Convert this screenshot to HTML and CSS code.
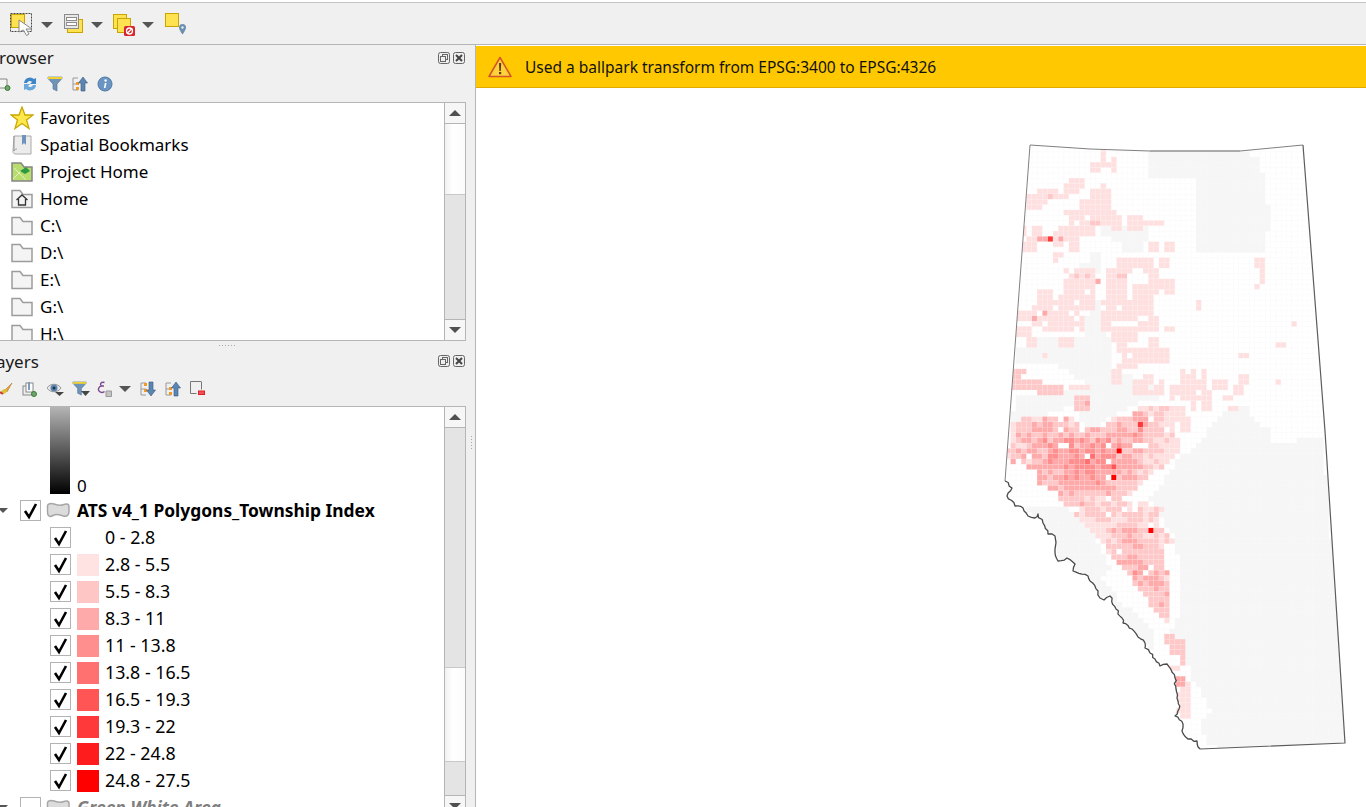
FILE: index.html
```html
<!DOCTYPE html>
<html lang="en">
<head>
<meta charset="utf-8">
<title>QGIS</title>
<link rel="stylesheet" href="styles.css">
<script src="map.js" defer></script>
</head>
<body>
<svg class="defs" width="0" height="0" aria-hidden="true">
  <symbol id="folder" viewBox="0 0 22 20"><path d="M1 18.500V1.500h8l3 4h9v13z" fill="#f4f4f4" stroke="#9c9c9c" stroke-width="1.500"/></symbol>
  <symbol id="check" viewBox="0 0 21 21"><path d="M5 11l4 6 7-13" fill="none" stroke="#000" stroke-width="2.600"/></symbol>
  <symbol id="blob" viewBox="0 0 24 17"><path d="M1.500 4C1.500 1.500 5 1 8 2s6 2 9 .8 6-1.500 6 2v5c0 3-2 5-5.500 4.200S11 11 7 13.500 1.500 13 1.500 10z" fill="#dcdcdc" stroke="#a6a6a6" stroke-width="1.500"/></symbol>
  <symbol id="ddn" viewBox="0 0 12 6"><path d="M0 0h12L6 6z" fill="#555"/></symbol>
  <symbol id="dock" viewBox="0 0 12 12"><rect x=".5" y=".5" width="11" height="11" rx="2" fill="#eee" stroke="#666"/><rect x="4.500" y="2.500" width="5" height="5" fill="none" stroke="#666"/><rect x="2.500" y="4.500" width="5" height="5" fill="#eee" stroke="#666"/></symbol>
  <symbol id="close" viewBox="0 0 12 12"><rect x=".5" y=".5" width="11" height="11" rx="2" fill="#eee" stroke="#666"/><path d="M3 3l6 6M9 3l-6 6" stroke="#444" stroke-width="2"/></symbol>
  <symbol id="upicon" viewBox="0 0 16 16"><path d="M1 2h5M1 2v12h5M1 8h5" fill="none" stroke="#999"/><rect x="4" y="6" width="3" height="3" fill="#f09a28"/><rect x="4" y="11" width="3" height="3" fill="#f09a28"/><path d="M11 1l4.500 6H13v8H9V7H6.500z" fill="#5b86b4" stroke="#35597f" stroke-width=".6"/></symbol>
  <symbol id="downicon" viewBox="0 0 16 16"><path d="M1 2h5M1 2v12h5M1 8h5" fill="none" stroke="#999"/><rect x="4" y="2" width="3" height="3" fill="#f09a28"/><rect x="4" y="8" width="3" height="3" fill="#f09a28"/><path d="M11 15l4.500-6H13V1H9v8H6.500z" fill="#5b86b4" stroke="#35597f" stroke-width=".6"/></symbol>
  <symbol id="filter" viewBox="0 0 16 16"><path d="M1 1h14v1.500L10 8v7l-4-2V8L1 2.500z" fill="#6f94b8" stroke="#4b7094" stroke-width=".6"/><rect x="1" y="1" width="14" height="2" fill="#f2d230"/></symbol>
</svg>

<div class="topstrip"></div>
<header class="toolbar">
  <span class="tb tb1"><svg width="24" height="24" viewBox="0 0 24 24"><rect x=".5" y="1.500" width="21" height="18" fill="none" stroke="#444" stroke-dasharray="2 1"/><rect x="1.500" y="2.500" width="13" height="13" fill="#ffe24f" stroke="#c8a500"/><path d="M9 8l13 9h-6l3 5-2.500 1.500-3-5.500L9 20z" fill="#fff" stroke="#888"/></svg></span>
  <span class="drop"><svg width="12" height="6"><use href="#ddn"/></svg></span>
  <span class="tb tb2"><svg width="20" height="20" viewBox="0 0 20 20"><rect x="3.500" y="5.500" width="15" height="13" fill="#ffe24f" stroke="#c8a500"/><rect x=".5" y=".5" width="14" height="14" fill="#e8e8e8" stroke="#8c8c8c"/><rect x="2.500" y="3.500" width="10" height="3" fill="#fff" stroke="#8c8c8c"/><rect x="2.500" y="8.500" width="10" height="3" fill="#fff" stroke="#8c8c8c"/></svg></span>
  <span class="drop"><svg width="12" height="6"><use href="#ddn"/></svg></span>
  <span class="tb tb3"><svg width="23" height="22" viewBox="0 0 23 22"><rect x=".5" y=".5" width="13" height="14" fill="#ffe24f" stroke="#c8a500"/><rect x="4.500" y="4.500" width="13" height="14" fill="#ffe24f" stroke="#c8a500"/><rect x="11" y="12" width="11" height="10" rx="1.500" fill="#d9262c"/><circle cx="16.500" cy="17" r="3" fill="none" stroke="#fff" stroke-width="1.300"/><path d="M14 19.500l5-5" stroke="#fff" stroke-width="1.300"/></svg></span>
  <span class="drop"><svg width="12" height="6"><use href="#ddn"/></svg></span>
  <span class="tb tb4"><svg width="22" height="22" viewBox="0 0 22 22"><rect x=".5" y=".5" width="13" height="13" fill="#ffe24f" stroke="#c8a500"/><path d="M17.500 11a3.500 3.500 0 0 1 3.500 3.500c0 2.500-3.500 7-3.500 7s-3.500-4.500-3.500-7a3.500 3.500 0 0 1 3.500-3.500z" fill="#6d8fb0"/><circle cx="17.500" cy="14.500" r="1.200" fill="#e8eef4"/></svg></span>
</header>

<main class="main">
  <aside class="side">
    <section class="panel">
      <div class="phead">
        <span class="ptitle ptitle-b">Browser</span>
        <span class="pbtns"><svg width="12" height="12"><use href="#dock"/></svg><svg width="12" height="12"><use href="#close"/></svg></span>
      </div>
      <div class="tools">
        <span class="ti"><svg width="16" height="16" viewBox="0 0 16 16"><path d="M-2 3h12v9H-2z" fill="#f4f4f4" stroke="#888"/><circle cx="10.500" cy="12" r="2.500" fill="#6da868" stroke="#3f7a3c"/></svg></span>
        <span class="ti"><svg width="16" height="16" viewBox="0 0 16 16"><path d="M2 7a6 6 0 0 1 10-4l2-1v6H8l2-2a3 3 0 0 0-5 1z" fill="#3f86c9"/><path d="M14 9a6 6 0 0 1-10 4l-2 1V8h6l-2 2a3 3 0 0 0 5-1z" fill="#6aa7dc"/></svg></span>
        <span class="ti"><svg width="16" height="16"><use href="#filter"/></svg></span>
        <span class="ti"><svg width="16" height="16"><use href="#upicon"/></svg></span>
        <span class="ti"><svg width="16" height="16" viewBox="0 0 16 16"><circle cx="8" cy="8" r="7" fill="#6a95c2" stroke="#4d78a5"/><circle cx="8.600" cy="4.500" r="1.200" fill="#fff"/><path d="M7.800 7h1.700l-1 5h-1.600z" fill="#fff"/></svg></span>
      </div>
      <div class="listbox listbox-b">
        <div class="tree">
          <div class="row row-b"><svg class="ic ic-star" width="24" height="24" viewBox="0 0 24 24"><path d="M12 1l3 8h8l-6.500 5 2.500 8.500-7-5-7 5L7.500 14 1 9h8z" fill="#ffe84d" stroke="#c9a800" stroke-width="1.300"/></svg><span class="fav">Favorites</span></div>
          <div class="row row-b"><svg class="ic" width="22" height="22" viewBox="0 0 22 22"><path d="M3 2h17v18H5c-3 0-3-2-3-3z" fill="#ececec" stroke="#aaa"/><path d="M3 2v15c1-2 2-2 3-2" fill="none" stroke="#999"/><path d="M11 1h4v10l-2-2-2 2z" fill="#6f93bd"/></svg>Spatial Bookmarks</div>
          <div class="row row-b"><svg class="ic" width="22" height="22" viewBox="0 0 22 22"><path d="M1 2h9l3 4h8v14H1z" fill="#b9dc6e" stroke="#858585" stroke-width="1.500"/><path d="M2 18L13 7M3 7l12 12" stroke="#e4f2c0"/><path d="M9 10l6-4 4 4-5 3z" fill="#2b9a3e"/></svg>Project Home</div>
          <div class="row row-b"><svg class="ic" width="22" height="20" viewBox="0 0 22 20"><use href="#folder"/><path d="M5.500 11L11 6l5.500 5M7.500 10v6h7v-6" fill="none" stroke="#333" stroke-width="1.300"/></svg>Home</div>
          <div class="row row-b"><svg class="ic" width="22" height="20"><use href="#folder"/></svg>C:\</div>
          <div class="row row-b"><svg class="ic" width="22" height="20"><use href="#folder"/></svg>D:\</div>
          <div class="row row-b"><svg class="ic" width="22" height="20"><use href="#folder"/></svg>E:\</div>
          <div class="row row-b"><svg class="ic" width="22" height="20"><use href="#folder"/></svg>G:\</div>
          <div class="row row-b"><svg class="ic" width="22" height="20"><use href="#folder"/></svg>H:\</div>
        </div>
        <div class="sbar">
          <div class="sbtn"><i class="tri up"></i></div>
          <div class="thumb thumb-b"></div>
          <div class="track"></div>
          <div class="sbtn"><i class="tri dn"></i></div>
        </div>
      </div>
    </section>

    <div class="split"><span class="dots"></span></div>

    <section class="panel panel-l">
      <div class="phead">
        <span class="ptitle ptitle-l">Layers</span>
        <span class="pbtns"><svg width="12" height="12"><use href="#dock"/></svg><svg width="12" height="12"><use href="#close"/></svg></span>
      </div>
      <div class="tools tools-l">
        <span class="ti"><svg width="16" height="16" viewBox="0 0 16 16"><path d="M15 2L8 9l2 2z" fill="#e8a33a" stroke="#a56d18" stroke-width=".5"/><path d="M8 8c-3 0-3 3-6 4 3 2 7 1 8-2z" fill="#d7c43a"/><path d="M3 11l3 2" stroke="#d23a3a" stroke-width="2"/></svg></span>
        <span class="ti"><svg width="16" height="16" viewBox="0 0 16 16"><rect x="1" y="5" width="9" height="9" fill="#eee" stroke="#888"/><rect x="4" y="2" width="7" height="9" fill="#fff" stroke="#888"/><path d="M6 1h2v8H6z" fill="#7d9cbd"/><circle cx="12" cy="13" r="2.500" fill="#6da868" stroke="#3f7a3c"/></svg></span>
        <span class="ti"><svg width="17" height="16" viewBox="0 0 17 16"><path d="M0 7c3-5 11-5 14 0-3 5-11 5-14 0z" fill="#e6e6e6" stroke="#999"/><circle cx="7" cy="7" r="3.500" fill="#5d86ae"/><circle cx="7" cy="7" r="1.500" fill="#1e3550"/><path d="M8 11h9l-4.500 4z" fill="#444"/></svg></span>
        <span class="ti"><svg width="18" height="16" viewBox="0 0 18 16"><use href="#filter" width="15" height="15"/><path d="M9 10h9l-4.500 5z" fill="#444"/></svg></span>
        <span class="ti ti-eps"><svg width="15" height="16" viewBox="0 0 15 16"><path d="M7.500 1.500C4 .5 2.500 3 4.500 5 1.500 5.500 .5 8.500 2.500 10.500c1.500 1.500 4 1 5 0M4.500 5H7" fill="none" stroke="#7b4a8e" stroke-width="1.400"/><path d="M9 10h5.500v5.500H9z" fill="#c4c4c4" stroke="#999"/></svg></span>
        <span class="ti ti-a"><svg width="12" height="6"><use href="#ddn"/></svg></span>
        <span class="ti"><svg width="16" height="16"><use href="#downicon"/></svg></span>
        <span class="ti"><svg width="16" height="16"><use href="#upicon"/></svg></span>
        <span class="ti"><svg width="15" height="15" viewBox="0 0 15 15"><path d="M11 .5H.5v12h6" fill="none" stroke="#777"/><path d="M11.500 .5v8" stroke="#777"/><rect x="8.500" y="10" width="6" height="3.500" fill="#ef5060" stroke="#d22"/></svg></span>
      </div>
      <div class="listbox listbox-l">
        <div class="tree">
          <div class="ramp"><span class="rampbar"></span><span class="rampval">0</span></div>
          <div class="row group"><i class="exp"></i><span class="cb"><svg width="21" height="21"><use href="#check"/></svg></span><svg class="blob" width="24" height="17"><use href="#blob"/></svg><b>ATS v4_1 Polygons_Township Index</b></div>
          <div class="row cat"><span class="cb"><svg width="21" height="21"><use href="#check"/></svg></span><span class="sw s0"></span>0 - 2.8</div>
          <div class="row cat"><span class="cb"><svg width="21" height="21"><use href="#check"/></svg></span><span class="sw s1"></span>2.8 - 5.5</div>
          <div class="row cat"><span class="cb"><svg width="21" height="21"><use href="#check"/></svg></span><span class="sw s2"></span>5.5 - 8.3</div>
          <div class="row cat"><span class="cb"><svg width="21" height="21"><use href="#check"/></svg></span><span class="sw s3"></span>8.3 - 11</div>
          <div class="row cat"><span class="cb"><svg width="21" height="21"><use href="#check"/></svg></span><span class="sw s4"></span>11 - 13.8</div>
          <div class="row cat"><span class="cb"><svg width="21" height="21"><use href="#check"/></svg></span><span class="sw s5"></span>13.8 - 16.5</div>
          <div class="row cat"><span class="cb"><svg width="21" height="21"><use href="#check"/></svg></span><span class="sw s6"></span>16.5 - 19.3</div>
          <div class="row cat"><span class="cb"><svg width="21" height="21"><use href="#check"/></svg></span><span class="sw s7"></span>19.3 - 22</div>
          <div class="row cat"><span class="cb"><svg width="21" height="21"><use href="#check"/></svg></span><span class="sw s8"></span>22 - 24.8</div>
          <div class="row cat"><span class="cb"><svg width="21" height="21"><use href="#check"/></svg></span><span class="sw s9"></span>24.8 - 27.5</div>
          <div class="row group off"><i class="exp"></i><span class="cb"></span><svg class="blob" width="24" height="17"><use href="#blob"/></svg><b><em>Green White Area</em></b></div>
        </div>
        <div class="sbar">
          <div class="sbtn"><i class="tri up"></i></div>
          <div class="track track-l1"></div>
          <div class="thumb thumb-l"></div>
          <div class="track track-l2"></div>
          <div class="sbtn sbtn-last"><i class="tri dn"></i></div>
        </div>
      </div>
      <span class="vdots"></span>
    </section>
  </aside>

  <section class="canvas">
    <div class="msgbar">
      <svg class="warn" width="24" height="22" viewBox="0 0 24 22"><path d="M12 1.500L23 20.500H1z" fill="#ffd23c" stroke="#d4552a" stroke-width="1.500" stroke-linejoin="round"/><path d="M11 7h2.200l-.4 8h-1.400z" fill="#5a3a10"/><rect x="11" y="16" width="2.200" height="2.200" fill="#5a3a10"/></svg>
      <span>Used a ballpark transform from EPSG:3400 to EPSG:4326</span>
    </div>
    <div class="mapwrap">
      <svg id="map" class="map" viewBox="476 88 890 719" preserveAspectRatio="xMinYMin">
        <defs>
          <clipPath id="ab"><path d="M1030 144L1090 148L1150 150L1240 150L1303 144L1325 430L1345 742L1200 748L1197 740L1188 738L1182 730L1182 720L1175 715L1178 700L1175 677L1167 663L1160 665L1155 658L1145 647L1145 642L1132 628L1122 617L1110 595L1100 597L1098 590L1090 580L1088 575L1073 570L1075 563L1067 557L1058 560L1055 535L1048 533L1043 522L1038 513L1035 517L1028 515L1023 507L1015 505L1007 495L1012 487L1005 480Z"/></clipPath>
        </defs>
        <g id="cells" class="cells" clip-path="url(#ab)"></g>
        <path class="edge edge-n" d="M1030 144L1090 148L1150 150"/>
        <path class="edge edge-d" d="M1150 150L1240 150"/>
        <path class="edge edge-n" d="M1240 150L1303 144"/>
        <path class="edge edge-r" d="M1303 144L1325 430L1345 742L1200 748"/>
        <path class="edge edge-n" d="M1005 480L1030 144"/>
        <path id="rockies" class="edge edge-m" d=""/>
      </svg>
    </div>
  </section>
</main>
</body>
</html>
```

FILE: styles.css
```css
* { box-sizing: border-box; }
html, body { margin: 0; height: 807px; overflow: hidden; background: #fff; }
body {
  display: flex; flex-direction: column; width: 1366px;
  font-family: "Noto Sans", "Open Sans", sans-serif; font-size: 17px; color: #000;
}
svg { display: block; flex: none; }
.defs { position: absolute; }

.topstrip { height: 2px; background: #fff; flex: none; }
.toolbar {
  height: 43px; flex: none; display: flex; align-items: center;
  background: #f0f0f0; border-top: 1px solid #c4c4c4; border-bottom: 1px solid #b5b5b5;
}
.tb { display: block; }
.tb1 { margin: 1px 0 0 10px; }
.tb2 { margin: 1px 0 0 11px; }
.tb3 { margin: 2px -1px 0 10px; }
.tb4 { margin: 1px 0 0 11px; }
.drop { display: block; margin: 3px 0 0 7px; }

.main { flex: 1; display: flex; min-height: 0; }
.side {
  width: 476px; flex: none; display: flex; flex-direction: column;
  background: #f0f0f0; border-right: 1px solid #b5b5b5;
}
.panel { position: relative; flex: none; padding-right: 9px; }
.panel-l { flex: 1; display: flex; flex-direction: column; min-height: 0; }
.phead { height: 27px; display: flex; align-items: center; justify-content: space-between; flex: none; }
.ptitle { display: block; line-height: 27px; font-size: 17px; color: #1a1a1a; margin-top: -2px; }
.ptitle-b { margin-left: -12px; }
.ptitle-l { margin-left: -13px; margin-top: 0; }
.pbtns { display: flex; gap: 3px; margin-right: 1px; margin-top: -2px; }
.tools { height: 30px; display: flex; align-items: center; margin-left: -3px; padding-bottom: 6px; flex: none; }
.tools-l { height: 31px; padding-bottom: 4px; }
.ti { display: block; width: 25px; flex: none; }
.ti-eps { width: 20px; }
.ti-a { width: 23px; padding-left: 2px; }

.listbox { display: flex; background: #fff; border-top: 1px solid #b5b5b5; overflow: hidden; }
.listbox-b { height: 239px; border-bottom: 1px solid #b5b5b5; }
.listbox-l { flex: 1; min-height: 0; }
.tree { flex: 1; min-width: 0; overflow: hidden; }
.row { height: 27px; display: flex; align-items: center; white-space: nowrap; }
.row-b .ic { margin-left: 11px; margin-right: 7px; width: 22px; }
.row-b .ic-star { margin-left: 10px; margin-right: 6px; width: 24px; }
.row-b:first-child { margin-top: 1px; }
.fav { font-size: 16.4px; }
.ramp { height: 90px; display: flex; align-items: flex-end; padding-left: 50px; }
.rampbar { display: block; width: 20px; height: 87px; margin-bottom: 3px; background: linear-gradient(#b4b4b4, #000); }
.rampval { display: block; margin-left: 7px; line-height: 22px; }
.exp { display: block; width: 0; height: 0; margin: 1px 12px 0 -2px; border: solid transparent; border-width: 5px 5px 0; border-top-color: #555; }
.cb { display: block; width: 21px; height: 21px; margin-top: 1px; background: #fff; border: 1px solid #b3b3b3; flex: none; }
.cb svg { margin: -1px; }
.blob { margin: 1px 7px 0 5px; }
.group { padding-bottom: 1px; }
.group b { font-weight: 700; font-size: 17.4px; }
.off { color: #7f7f7f; }
.cat { padding: 0 0 1px 50px; font-size: 17.8px; }
.sw { display: block; width: 22px; height: 22px; margin: 1px 6px 0; flex: none; }
.s0 { background: #fff; }
.s1 { background: #ffe2e2; }
.s2 { background: #ffc6c6; }
.s3 { background: #ffaaaa; }
.s4 { background: #ff8e8e; }
.s5 { background: #ff7171; }
.s6 { background: #ff5555; }
.s7 { background: #ff3939; }
.s8 { background: #ff1c1c; }
.s9 { background: #ff0000; }

.sbar {
  width: 22px; flex: none; display: flex; flex-direction: column;
  border-left: 1px solid #b5b5b5; border-right: 1px solid #b5b5b5; background: #e4e4e4;
}
.sbtn { height: 21px; flex: none; display: flex; align-items: center; justify-content: center; background: #f6f6f6; }
.sbtn:first-child { border-bottom: 1px solid #b5b5b5; }
.sbtn:last-child { border-top: 1px solid #b5b5b5; }
.tri { display: block; width: 0; height: 0; border: 6px solid transparent; }
.tri.up { border-top: 0; border-bottom: 6px solid #505050; }
.tri.dn { border-bottom: 0; border-top: 6px solid #505050; }
.thumb { flex: none; background: linear-gradient(90deg, #f1f1f1, #fff 40%, #fbfbfb); border-bottom: 1px solid #c8c8c8; }
.thumb-b { height: 71px; }
.track { flex: 1; }
.track-l1 { flex: none; height: 239px; }
.thumb-l { height: 95px; border-top: 1px solid #c8c8c8; }
.track-l2 { flex: none; height: 33px; }

.split { height: 7px; flex: none; position: relative; }
.dots {
  position: absolute; left: 219px; top: 4px; width: 16px; height: 1px;
  background: repeating-linear-gradient(90deg, #a8a8a8 0 1px, transparent 1px 3px);
}
.vdots {
  position: absolute; left: 471px; top: 88px; width: 1px; height: 14px;
  background: repeating-linear-gradient(#a8a8a8 0 1px, transparent 1px 3px);
}

.canvas { flex: 1; min-width: 0; display: flex; flex-direction: column; background: #fff; }
.msgbar {
  height: 42px; flex: none; display: flex; align-items: center; gap: 13px;
  margin: 1px 0 1px; padding-left: 12px;
  background: #ffc800; border-bottom: 1px solid #e0aa00; font-size: 15.5px; color: #111;
}
.mapwrap { flex: 1; min-height: 0; }
.map { width: 890px; height: 719px; }
.cells { filter: blur(.5px); }
.edge { fill: none; stroke-linejoin: round; }
.edge-n { stroke: #808080; stroke-width: 1; }
.edge-d { stroke: #5a5a5a; stroke-width: 1.2; }
.edge-r { stroke: #5c5c5c; stroke-width: 1.2; }
.edge-m { stroke: #4a4a4a; stroke-width: 1.3; }
```

FILE: map.js
```js
// Choropleth of township cells: level per cell, from hand-read extents.
(function () {
  var NS = 'http://www.w3.org/2000/svg';
  var S = 5.3, X0 = 1000, Y0 = 140;
  var COLORS = ['', '#ffe0e0', '#ffc8c8', '#ffaaaa', '#ff8e8e', '#ff7171', '#ff5555', '#ff3939', '#ff1c1c', '#ff0000'];
  var GREY = [
    [[1151,150],[1240,150],[1260,160],[1268,205],[1273,222],[1267,230],[1267,252],[1195,254],[1195,179],[1151,179]],
    [[1328,500],[1323,437],[1272,442],[1270,430],[1250,417],[1247,405],[1230,408],[1213,422],[1200,440],[1180,457],[1165,478],[1150,497],[1163,520],[1177,540],[1178,560],[1180,590],[1177,620],[1172,630],[1187,653],[1190,677],[1200,687],[1210,710],[1200,727],[1207,742],[1220,750],[1350,745]],
    [[1016,350],[1040,335],[1085,335],[1090,298],[1100,298],[1110,345],[1110,370],[1145,380],[1165,395],[1130,405],[1112,415],[1095,427],[1085,427],[1080,415],[1070,405],[1030,420],[1012,420],[1015,395],[1060,392],[1090,385],[1060,365],[1015,365]],
    [[1103,227],[1147,227],[1147,237],[1143,250],[1123,250],[1123,240],[1103,237]],
    [[1090,253],[1100,253],[1100,270],[1080,270],[1080,263],[1090,263]],
    [[1027,508],[1065,503],[1082,520],[1097,540],[1113,570],[1100,575],[1120,600],[1150,625],[1155,640],[1150,650],[1122,620],[1100,597],[1088,578],[1058,562],[1040,522]]
  ];
  // x, y, w, h, level
  var RECTS = [
    [1103,150,5,10],[1093,163,5,8],[1103,163,13,5],[1113,159,4,8],[1070,182,13,5],[1064,186,10,4],[1073,190,4,5],
    [1040,190,18,8],[1028,193,20,8],[1030,202,10,5],[1063,195,5,5],[1103,183,5,10],[1095,192,18,5],[1083,202,10,10],
    [1100,202,13,5],[1105,207,4,5],[1068,210,30,5],[1073,215,27,18],[1098,217,17,5],[1110,212,4,5],[1113,217,10,8],
    [1128,217,13,8],[1142,222,20,4],[1023,227,20,10],[1027,237,13,4],[1053,233,14,4],[1062,228,10,4],[1072,233,5,5],
    [1070,240,10,4],[1073,243,5,8],[1023,245,14,5],[1057,237,5,10],[1053,257,5,5],[1057,252,5,4],[1153,245,5,5],
    [1167,242,5,8],[1130,260,8,4],[1120,260,8,13],[1148,260,5,8],[1162,260,5,4],[1153,270,5,20],[1150,283,13,5],
    [1168,283,5,8],[1110,270,18,33],[1065,270,10,17],[1073,272,23,17],[1068,290,27,17],[1062,295,8,20],[1045,290,5,5],
    [1040,293,8,8],[1033,303,33,23],[1020,312,57,8],[1040,320,43,10],[1103,300,37,20],[1102,312,5,18],[1133,287,20,20],
    [1143,303,10,13],[1150,320,7,10],[1017,330,13,5],[1030,337,3,7],[1047,320,30,12],[1063,338,13,8],[1043,352,4,6],
    [1103,320,8,13],[1115,330,23,10],[1117,340,7,8],[1125,350,33,8],[1153,340,5,10],[1160,350,8,12],[1140,322,8,8],
    [1168,327,4,4],[1197,302,4,5],[1293,322,5,5],[1280,342,4,4],[1242,353,4,4],[1117,363,16,5],[1112,368,8,13],
    [1192,368,5,5],[1203,373,5,4],[1183,373,10,20],[1173,388,20,10],[1197,380,8,7],[1213,382,12,5],[1240,377,8,5],
    [1235,387,8,4],[1277,380,5,4],[1227,397,4,4],[1232,406,4,4],[1197,390,13,20],[1193,403,5,7],[1133,383,30,8],
    [1145,378,8,5],[1173,408,13,12],[1183,417,4,4],[1185,426,3,3],[1258,260,5,4],[1262,272,5,10],[1256,284,5,5],
    [1013,373,13,17,2],[1027,380,13,8,2],[1040,388,20,5,2],[1073,386,18,4],[1078,395,13,15,2],
    [1168,635,5,8,2],[1173,640,10,12,2],[1182,658,5,4,2],[1178,677,5,10,3],[1180,682,8,28],[1183,715,5,4],[1173,667,5,5]
  ];
  var HOT = [[1049,239,7],[1043,238,3],[1038,238,3],[1063,240,3],[1052,196,2],[1093,222,2],[1097,224,2],[1097,278,3],[1088,277,2],[1076,275,2],[1120,275,2],[1125,275,2],[1035,315,3],[1047,312,3],[1085,402,3],[1143,423,7],[1119,451,9],[1115,474,9],[1115,466,6],[1149,527,9],[1182,677,3]];
  var MAIN = [[1010,420],[1053,413],[1072,413],[1080,430],[1110,423],[1113,417],[1133,413],[1137,407],[1167,403],[1173,423],[1180,447],[1173,457],[1157,470],[1140,487],[1130,497],[1085,503],[1063,503],[1057,493],[1037,482],[1037,470],[1007,460]];
  var SOUTH = [[1063,500],[1133,500],[1163,507],[1157,520],[1173,540],[1163,557],[1172,583],[1172,623],[1162,617],[1150,603],[1133,580],[1115,560],[1097,537],[1080,520]];
  var HOLES = [[1135,440,14,10],[1105,495,7,5],[1056,415,8,6],[1132,500,6,10],[1158,525,8,4],[1168,560,7,4],[1120,505,5,5],[1068,504,12,8]];
  var GAUSS = [[1105,460,34,2.3],[1140,425,16,1.5],[1045,445,34,1.5],[1075,470,26,1.2],[1140,570,26,1.7],[1160,600,14,1.3],[1130,530,22,.8]];
  var ROCKIES = [[1200,748],[1197,740],[1188,738],[1182,730],[1183,723],[1175,715],[1179,708],[1178,700],[1176,688],[1175,677],[1167,663],[1160,665],[1155,658],[1150,652],[1145,647],[1145,642],[1138,636],[1132,628],[1123,622],[1122,617],[1116,608],[1110,595],[1104,599],[1100,597],[1098,590],[1090,580],[1088,575],[1073,570],[1075,563],[1067,557],[1058,560],[1055,548],[1055,535],[1048,533],[1043,522],[1038,513],[1035,517],[1028,515],[1023,507],[1015,505],[1007,495],[1012,487],[1005,480]];

  function inside(p, x, y) {
    var c = false;
    for (var i = 0, j = p.length - 1; i < p.length; j = i++) {
      if ((p[i][1] > y) !== (p[j][1] > y) && x < (p[j][0] - p[i][0]) * (y - p[i][1]) / (p[j][1] - p[i][1]) + p[i][0]) c = !c;
    }
    return c;
  }
  function noise(i, j) { var v = Math.sin(i * 12.9898 + j * 78.233) * 43758.5453; return v - Math.floor(v); }
  function key(i, j) { return i + ':' + j; }
  var levels = {};
  function mark(x, y, l) { levels[key(Math.floor((x - X0) / S), Math.floor((y - Y0) / S))] = l; }

  RECTS.forEach(function (r) {
    for (var y = r[1]; y < r[1] + r[3]; y += S / 2) for (var x = r[0]; x < r[0] + r[2]; x += S / 2) {
      var i = Math.floor((x - X0) / S), j = Math.floor((y - Y0) / S), k = key(i, j);
      if (r[2] * r[3] > 150 && noise(i + 31, j + 17) < .1) continue;
      levels[k] = Math.max(levels[k] || 0, r[4] || 1);
    }
  });

  var g = document.getElementById('cells');
  function rect(x, y, w, h, fill) {
    var e = document.createElementNS(NS, 'rect');
    e.setAttribute('x', x); e.setAttribute('y', y); e.setAttribute('width', w); e.setAttribute('height', h); e.setAttribute('fill', fill);
    g.appendChild(e);
  }
  for (var j = 0; j < 116; j++) for (var i = 0; i < 66; i++) {
    var x = X0 + i * S, y = Y0 + j * S, cx = x + S / 2, cy = y + S / 2;
    rect(x, y, S, S, '#fafafa');
    rect(x + .6, y + .6, S - .6, S - .6, '#fff');
    if (GREY.some(function (p) { return inside(p, cx, cy); })) rect(x, y, S + .1, S + .1, '#f6f6f6');
    var inMain = inside(MAIN, cx, cy), inSouth = inside(SOUTH, cx, cy);
    if (inMain || inSouth) {
      var hole = HOLES.some(function (h) { return cx > h[0] && cx < h[0] + h[2] && cy > h[1] && cy < h[1] + h[3]; });
      if (hole || noise(i, j) < .03) { rect(x, y, S, S, '#fff'); levels[key(i, j)] = 0; continue; }
      var heat = .85;
      GAUSS.forEach(function (q) {
        var d = ((cx - q[0]) * (cx - q[0]) + (cy - q[1]) * (cy - q[1])) / (q[2] * q[2]);
        heat += q[3] * Math.exp(-d);
      });
      var lvl = Math.max(1, Math.min(6, Math.floor(heat + noise(j + 7, i + 3) * 1.7)));
      levels[key(i, j)] = Math.max(levels[key(i, j)] || 0, lvl);
    }
  }
  HOT.forEach(function (h) { mark(h[0], h[1], h[2]); });
  Object.keys(levels).forEach(function (k) {
    var l = levels[k];
    if (!l) return;
    var p = k.split(':');
    rect(X0 + p[0] * S, Y0 + p[1] * S, S - .15, S - .15, COLORS[l]);
  });

  // Rugged provincial border along the divide
  var d = '', n = 0;
  for (var a = 0; a < ROCKIES.length - 1; a++) {
    var A = ROCKIES[a], B = ROCKIES[a + 1];
    var len = Math.hypot(B[0] - A[0], B[1] - A[1]), steps = Math.max(1, Math.round(len / 3));
    for (var s = 0; s < steps; s++) {
      var t = s / steps, w = s === 0 ? 0 : (noise(n++, 5) - .5) * 2.6;
      var px = A[0] + (B[0] - A[0]) * t - (B[1] - A[1]) / len * w;
      var py = A[1] + (B[1] - A[1]) * t + (B[0] - A[0]) / len * w;
      d += (d ? 'L' : 'M') + px.toFixed(1) + ' ' + py.toFixed(1);
    }
  }
  d += 'L1005 480';
  document.getElementById('rockies').setAttribute('d', d);
})();
```
